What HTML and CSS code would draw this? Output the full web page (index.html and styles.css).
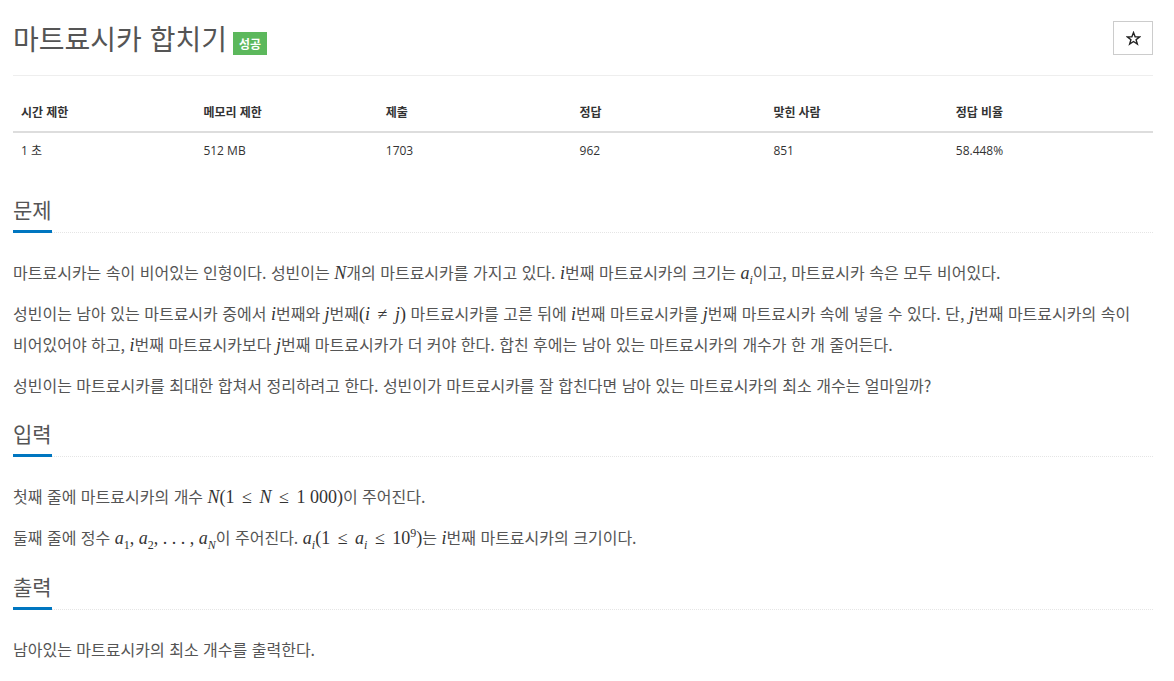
FILE: index.html
```html
<!DOCTYPE html>
<html lang="ko">
<head>
<meta charset="utf-8">
<title>마트료시카 합치기</title>
<link rel="stylesheet" href="styles.css">
</head>
<body>
<div class="page">
  <div class="page-header">
    <h1 class="title">마트료시카 합치기 <span class="label">성공</span></h1>
    <button class="star-btn" aria-label="즐겨찾기"><svg width="15" height="15" viewBox="0 0 24 24"><polygon points="12,2.5 14.6,9.2 21.8,9.4 16.1,13.9 18.2,20.9 12,16.8 5.8,20.9 7.9,13.9 2.2,9.4 9.4,9.2" fill="none" stroke="#222" stroke-width="2.2" stroke-linejoin="miter"/></svg></button>
  </div>

  <table class="info">
    <thead>
      <tr>
        <th class="c1">시간 제한</th>
        <th class="c2">메모리 제한</th>
        <th class="c3">제출</th>
        <th class="c4">정답</th>
        <th class="c5">맞힌 사람</th>
        <th class="c6">정답 비율</th>
      </tr>
    </thead>
    <tbody>
      <tr>
        <td>1 초</td>
        <td>512 MB</td>
        <td>1703</td>
        <td>962</td>
        <td>851</td>
        <td>58.448%</td>
      </tr>
    </tbody>
  </table>

  <section class="section">
    <div class="headline"><h2>문제</h2></div>
    <div class="text">
      <p>마트료시카는 속이 비어있는 인형이다. 성빈이는 <span class="m">N</span>개의 마트료시카를 가지고 있다. <span class="m">i</span>번째 마트료시카의 크기는 <span class="m">a<sub>i</sub></span>이고, 마트료시카 속은 모두 비어있다.</p>
      <p>성빈이는 남아 있는 마트료시카 중에서 <span class="m">i</span>번째와 <span class="m">j</span>번째<span class="m"><span class="r">(</span>i <span class="r op">≠</span> j<span class="r">)</span></span> 마트료시카를 고른 뒤에 <span class="m">i</span>번째 마트료시카를 <span class="m">j</span>번째 마트료시카 속에 넣을 수 있다. 단, <span class="m">j</span>번째 마트료시카의 속이 비어있어야 하고, <span class="m">i</span>번째 마트료시카보다 <span class="m">j</span>번째 마트료시카가 더 커야 한다. 합친 후에는 남아 있는 마트료시카의 개수가 한 개 줄어든다.</p>
      <p>성빈이는 마트료시카를 최대한 합쳐서 정리하려고 한다. 성빈이가 마트료시카를 잘 합친다면 남아 있는 마트료시카의 최소 개수는 얼마일까?</p>
    </div>
  </section>

  <section class="section">
    <div class="headline"><h2>입력</h2></div>
    <div class="text">
      <p>첫째 줄에 마트료시카의 개수 <span class="m">N<span class="r">(1 <span class="op">≤</span> </span>N<span class="r"> <span class="op">≤</span> 1 000)</span></span>이 주어진다.</p>
      <p>둘째 줄에 정수 <span class="m">a<sub class="r">1</sub><span class="r">, </span>a<sub class="r">2</sub><span class="r">, . . . , </span>a<sub>N</sub></span>이 주어진다. <span class="m">a<sub>i</sub><span class="r">(1 <span class="op">≤</span> </span>a<sub>i</sub><span class="r"> <span class="op">≤</span> 10<sup>9</sup>)</span></span>는 <span class="m">i</span>번째 마트료시카의 크기이다.</p>
    </div>
  </section>

  <section class="section">
    <div class="headline"><h2>출력</h2></div>
    <div class="text">
      <p>남아있는 마트료시카의 최소 개수를 출력한다.</p>
    </div>
  </section>
</div>
</body>
</html>
```

FILE: styles.css
```css
html, body {
  margin: 0;
  padding: 0;
  background: #fff;
}
body {
  font-family: "Open Sans", "Noto Sans CJK KR", sans-serif;
  color: #333;
  font-size: 14px;
}
.page {
  padding: 0 21px 0 13px;
}
.page-header {
  display: flex;
  justify-content: space-between;
  align-items: flex-start;
  padding-top: 21px;
  padding-bottom: 20px;
  border-bottom: 1px solid #eee;
}
.title {
  margin: 0;
  font-family: "Noto Sans CJK KR", sans-serif;
  font-weight: 400;
  font-size: 28px;
  line-height: 34px;
  color: #555;
  display: flex;
  align-items: center;
}
.label {
  display: inline-block;
  background: #5cb85c;
  color: #fff;
  font-size: 12px;
  font-weight: 700;
  line-height: 15px;
  padding: 4px 6px;
  margin-left: 6px;
  margin-top: 10px;
}
.star-btn {
  width: 40px;
  height: 34px;
  border: 1px solid #ccc;
  background: #fff;
  padding: 0;
  margin: 0;
  display: flex;
  align-items: center;
  justify-content: center;
}
.star-btn svg {
  display: block;
}
.info {
  width: 100%;
  border-collapse: collapse;
  margin-top: 18px;
  margin-bottom: 25px;
  font-size: 12px;
}
.info th, .info td {
  text-align: left;
  padding: 8px;
  line-height: 20px;
  color: #333;
}
.info th {
  font-weight: 700;
  border-bottom: 2px solid #ddd;
  padding-top: 9px;
  padding-bottom: 8px;
}
.info td {
  padding-top: 8px;
  padding-bottom: 8px;
}
.c1, .c2 { width: 16%; }
.c3 { width: 17%; }
.c4 { width: 17%; }
.c5 { width: 16%; }

.section {
  margin-top: 18px;
}
.headline {
  border-bottom: 1px dotted #e5e5e5;
  height: 38px;
}
.headline h2 {
  margin: 0;
  display: inline-block;
  font-family: "Noto Sans CJK KR", sans-serif;
  font-weight: 400;
  font-size: 21px;
  line-height: 30px;
  color: #555;
  border-bottom: 3px solid #0076c0;
  padding-bottom: 6px;
  padding-top: 0;
}
.text {
  padding-top: 24px;
}
.text p {
  margin: 0 0 10px;
  font-family: "Noto Sans CJK KR", sans-serif;
  font-size: 16px;
  line-height: 30px;
  color: #555;
  word-break: keep-all;
}
.m {
  font-family: "Liberation Serif", "DejaVu Serif", serif;
  font-style: italic;
  font-size: 18px;
  color: #333;
}
.m .r {
  font-style: normal;
}
.m .op {
  margin: 0 3px;
}
.m sub, .m sup {
  font-size: 12px;
  line-height: 0;
}
```
